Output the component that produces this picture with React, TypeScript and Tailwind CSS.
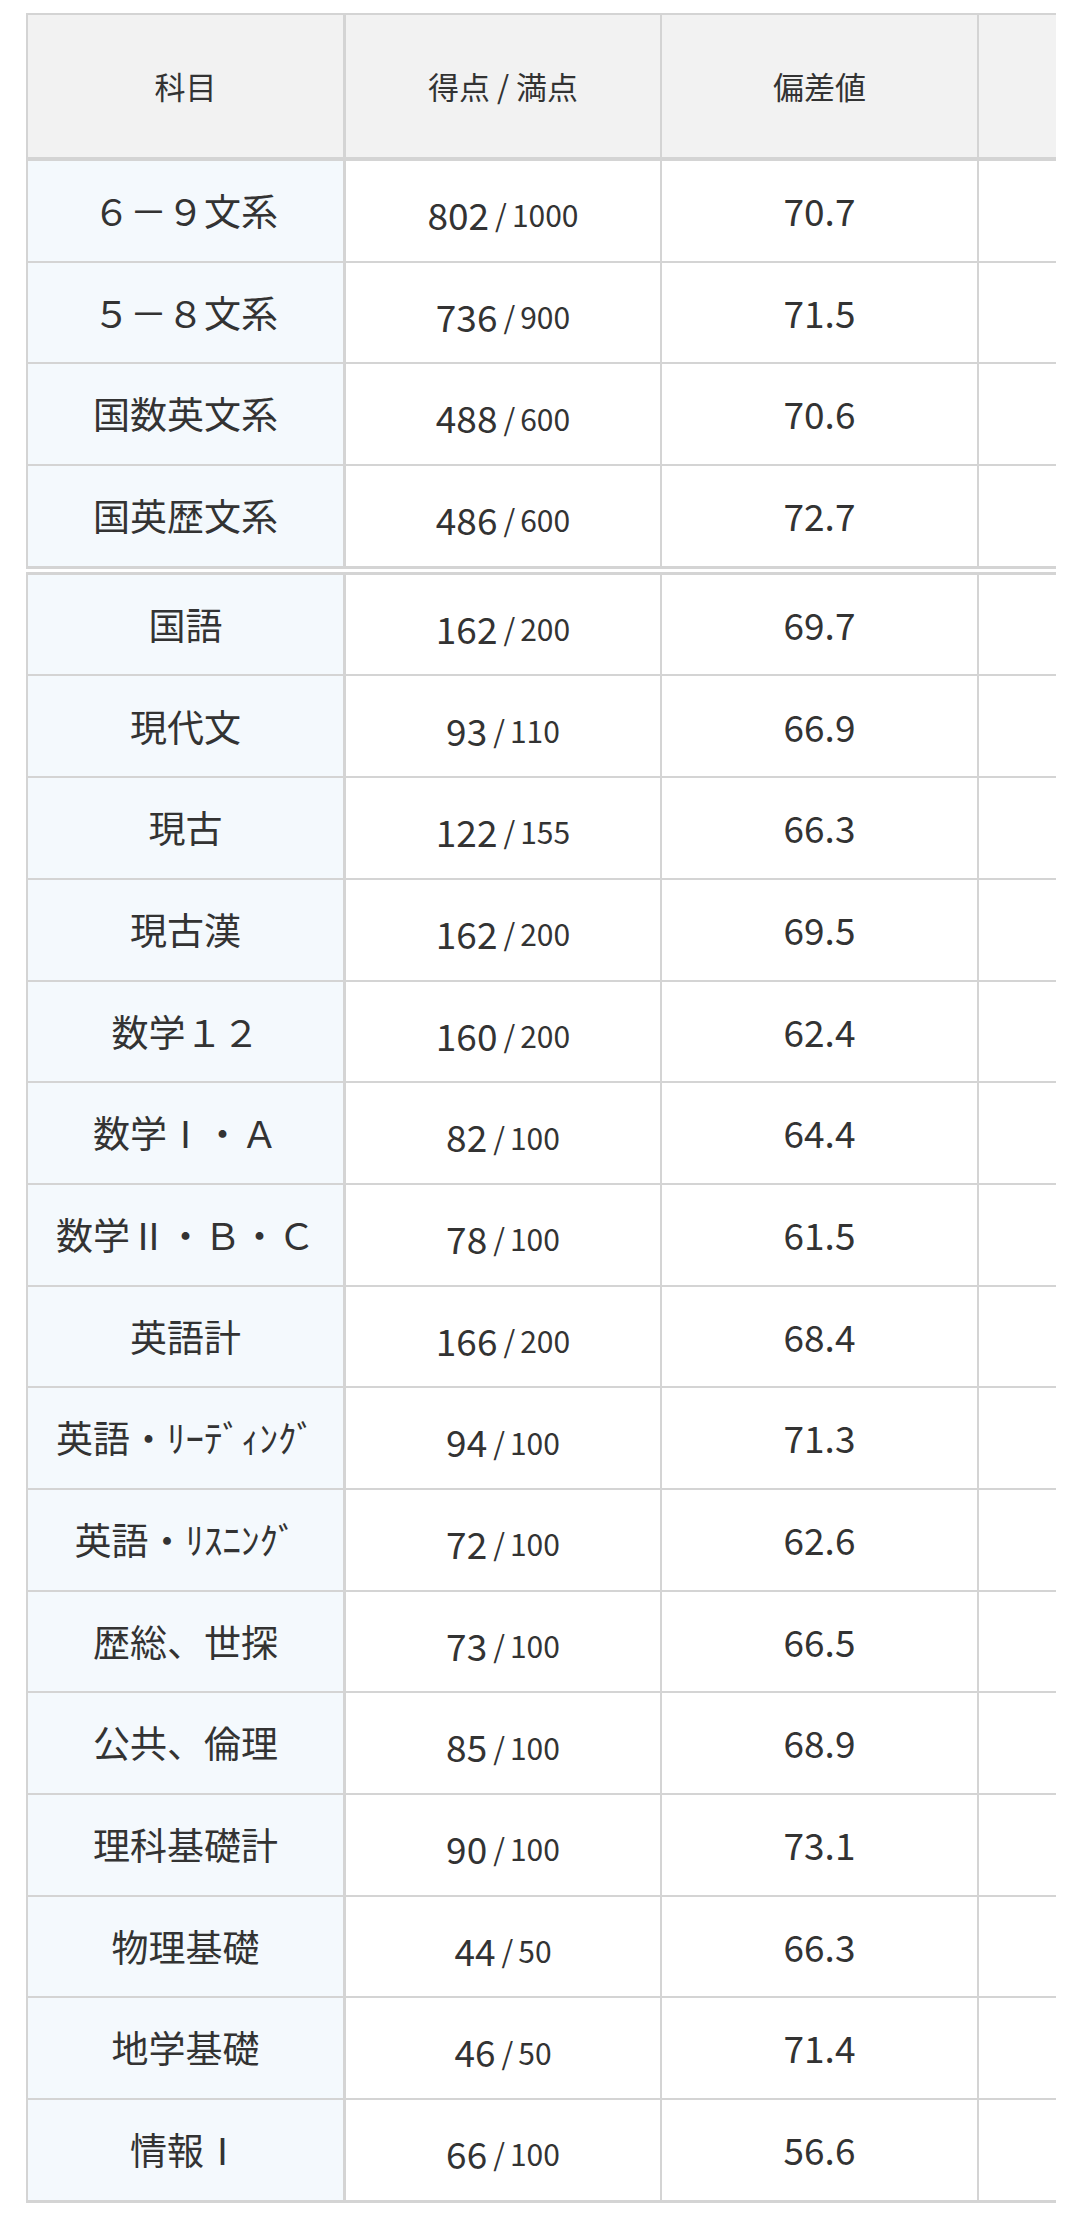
const font = { fontFamily: '"Noto Sans CJK JP", "Noto Sans", sans-serif' };

type Row = { subject: string; score: string; full: string; dev: string };

const summary: Row[] = [
  { subject: '６－９文系', score: '802', full: '1000', dev: '70.7' },
  { subject: '５－８文系', score: '736', full: '900', dev: '71.5' },
  { subject: '国数英文系', score: '488', full: '600', dev: '70.6' },
  { subject: '国英歴文系', score: '486', full: '600', dev: '72.7' },
];

const subjects: Row[] = [
  { subject: '国語', score: '162', full: '200', dev: '69.7' },
  { subject: '現代文', score: '93', full: '110', dev: '66.9' },
  { subject: '現古', score: '122', full: '155', dev: '66.3' },
  { subject: '現古漢', score: '162', full: '200', dev: '69.5' },
  { subject: '数学１２', score: '160', full: '200', dev: '62.4' },
  { subject: '数学Ⅰ・Ａ', score: '82', full: '100', dev: '64.4' },
  { subject: '数学Ⅱ・Ｂ・Ｃ', score: '78', full: '100', dev: '61.5' },
  { subject: '英語計', score: '166', full: '200', dev: '68.4' },
  { subject: '英語・ﾘｰﾃﾞｨﾝｸﾞ', score: '94', full: '100', dev: '71.3' },
  { subject: '英語・ﾘｽﾆﾝｸﾞ', score: '72', full: '100', dev: '62.6' },
  { subject: '歴総、世探', score: '73', full: '100', dev: '66.5' },
  { subject: '公共、倫理', score: '85', full: '100', dev: '68.9' },
  { subject: '理科基礎計', score: '90', full: '100', dev: '73.1' },
  { subject: '物理基礎', score: '44', full: '50', dev: '66.3' },
  { subject: '地学基礎', score: '46', full: '50', dev: '71.4' },
  { subject: '情報Ⅰ', score: '66', full: '100', dev: '56.6' },
];

function DataRow({ row, last }: { row: Row; last: boolean }) {
  return (
    <div
      className={`flex h-[99.7px] box-content border-[#d4d4d4] ${
        last ? 'border-b-[3px]' : 'border-b-2'
      }`}
    >
      <div className="w-[318px] shrink-0 flex items-center justify-center bg-[#f4f9fd] border-r-[3px] border-[#d4d4d4] text-[37px] text-[#333]">
        {row.subject}
      </div>
      <div className="w-[316px] shrink-0 flex items-center justify-center border-r-2 border-[#d4d4d4] text-[#333] pt-[8px]">
        <span className="text-[37px]">{row.score}</span>
        <span className="text-[30px] ml-[6px]">/</span>
        <span className="text-[30px] ml-[5px]">{row.full}</span>
      </div>
      <div className="w-[317px] shrink-0 flex items-center justify-center border-r-2 border-[#d4d4d4] text-[37px] text-[#333]">
        {row.dev}
      </div>
      <div className="w-[320px] shrink-0" />
    </div>
  );
}

export default function App() {
  return (
    <main className="min-h-[2223px] bg-white pt-[13px]" style={font}>
      <div className="ml-[26px] w-[1030px] overflow-hidden">
        <div className="w-[1300px]">
          {/* header + summary group */}
          <div className="border-l-2 border-t-2 border-[#d4d4d4]">
            <div className="flex h-[142px] box-content bg-[#f2f2f2] border-b-4 border-[#d4d4d4] text-[31px] text-[#333]">
              <div className="w-[318px] shrink-0 flex items-center justify-center border-r-[3px] border-[#d4d4d4]">
                科目
              </div>
              <div className="w-[316px] shrink-0 flex items-center justify-center border-r-2 border-[#d4d4d4]">
                得点 / 満点
              </div>
              <div className="w-[317px] shrink-0 flex items-center justify-center border-r-2 border-[#d4d4d4]">
                偏差値
              </div>
              <div className="w-[320px] shrink-0" />
            </div>
            {summary.map((r, i) => (
              <DataRow key={r.subject} row={r} last={i === summary.length - 1} />
            ))}
          </div>

          {/* subject group */}
          <div className="mt-[3px] border-l-2 border-t-[3px] border-[#d4d4d4]">
            {subjects.map((r, i) => (
              <DataRow key={r.subject} row={r} last={i === subjects.length - 1} />
            ))}
          </div>
        </div>
      </div>
    </main>
  );
}
